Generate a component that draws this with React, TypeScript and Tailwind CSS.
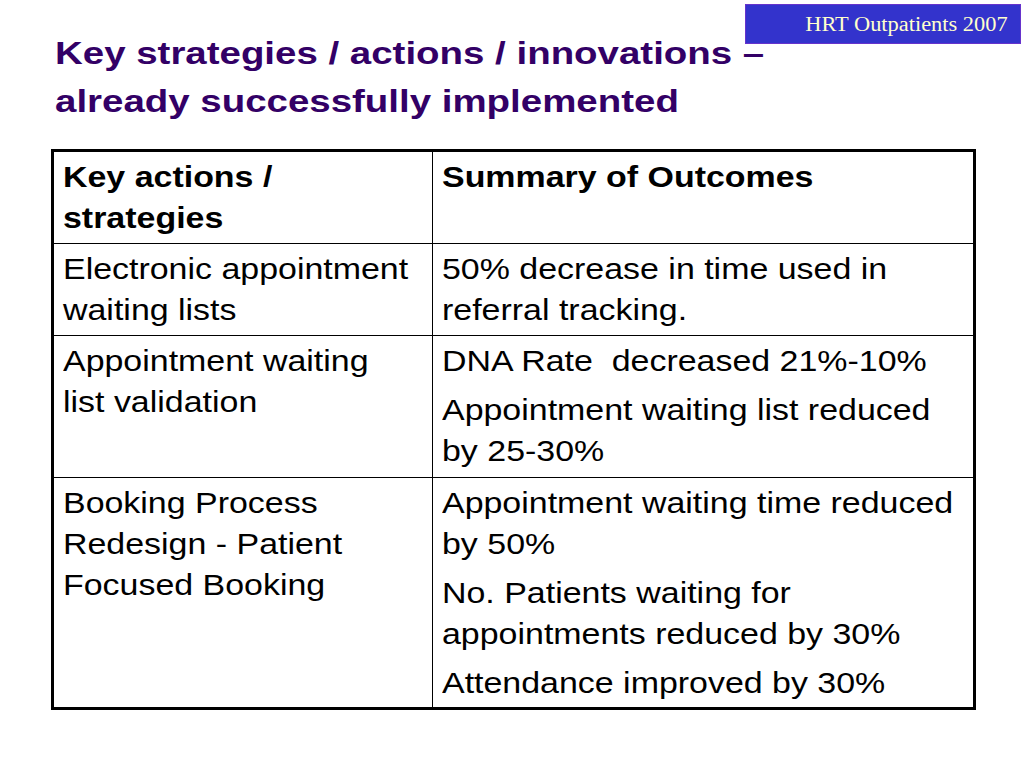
// each entry is a paragraph, each paragraph a list of lines as broken in the slide
type Para = string[];

const rows: { left: Para[]; right: Para[]; h: string }[] = [
  {
    left: [["Electronic appointment", "waiting lists"]],
    right: [["50% decrease in time used in", "referral tracking."]],
    h: "h-[92px]",
  },
  {
    left: [["Appointment waiting", "list validation"]],
    right: [["DNA Rate\u00a0 decreased 21%-10%"], ["Appointment waiting list reduced", "by 25-30%"]],
    h: "h-[142px]",
  },
  {
    left: [["Booking Process", "Redesign - Patient", "Focused Booking"]],
    right: [
      ["Appointment waiting time reduced", "by 50%"],
      ["No. Patients waiting for", "appointments reduced by 30%"],
      ["Attendance improved by 30%"],
    ],
    h: "h-[231px]",
  },
];

const Cell = ({ paras, bold, right }: { paras: Para[]; bold?: boolean; right?: boolean }) => (
  <td className={`align-top pl-[9px] pt-[5px] ${right ? "" : "border-r border-black"} ${bold ? "font-bold" : ""}`}>
    <div className="flex flex-col gap-[8px]">
      {paras.map((p, i) => (
        <div key={i}>
          {p.map((l) => (
            <p key={l} className="whitespace-nowrap origin-left scale-x-[1.17]">
              {l}
            </p>
          ))}
        </div>
      ))}
    </div>
  </td>
);

export default function App() {
  return (
    <div className="w-[1024px] h-[768px] bg-white relative overflow-hidden font-['Liberation_Sans',Arial,sans-serif]">
      <div className="absolute top-[4px] left-[745px] w-[276px] h-[40px] bg-[#3333cc] border border-[#6633cc] flex items-center justify-end pr-[12px]">
        <span className="font-['Liberation_Serif',serif] text-[20px] text-[#ffffcc] whitespace-nowrap origin-right scale-x-[1.12]">
          HRT Outpatients 2007
        </span>
      </div>
      <div className="pt-[30px] pl-[55px]">
        <h1 className="text-[31px] leading-[48px] font-bold text-[#330066]">
          <span className="block whitespace-nowrap origin-left scale-x-[1.24]">Key strategies / actions / innovations –</span>
          <span className="block whitespace-nowrap origin-left scale-x-[1.24]">already successfully implemented</span>
        </h1>
      </div>
      <div className="pl-[51px] pt-[23px]">
        <table className="w-[925px] border-collapse border-[3px] border-black text-[29px] leading-[41px] text-black">
          <colgroup>
            <col className="w-[380px]" />
            <col />
          </colgroup>
          <tbody>
            <tr className="h-[93px] border-b border-black">
              <Cell paras={[["Key actions /", "strategies"]]} bold />
              <Cell paras={[["Summary of Outcomes"]]} bold right />
            </tr>
            {rows.map((r, i) => (
              <tr key={i} className={`border-b border-black ${r.h}`}>
                <Cell paras={r.left} />
                <Cell paras={r.right} right />
              </tr>
            ))}
          </tbody>
        </table>
      </div>
    </div>
  );
}
